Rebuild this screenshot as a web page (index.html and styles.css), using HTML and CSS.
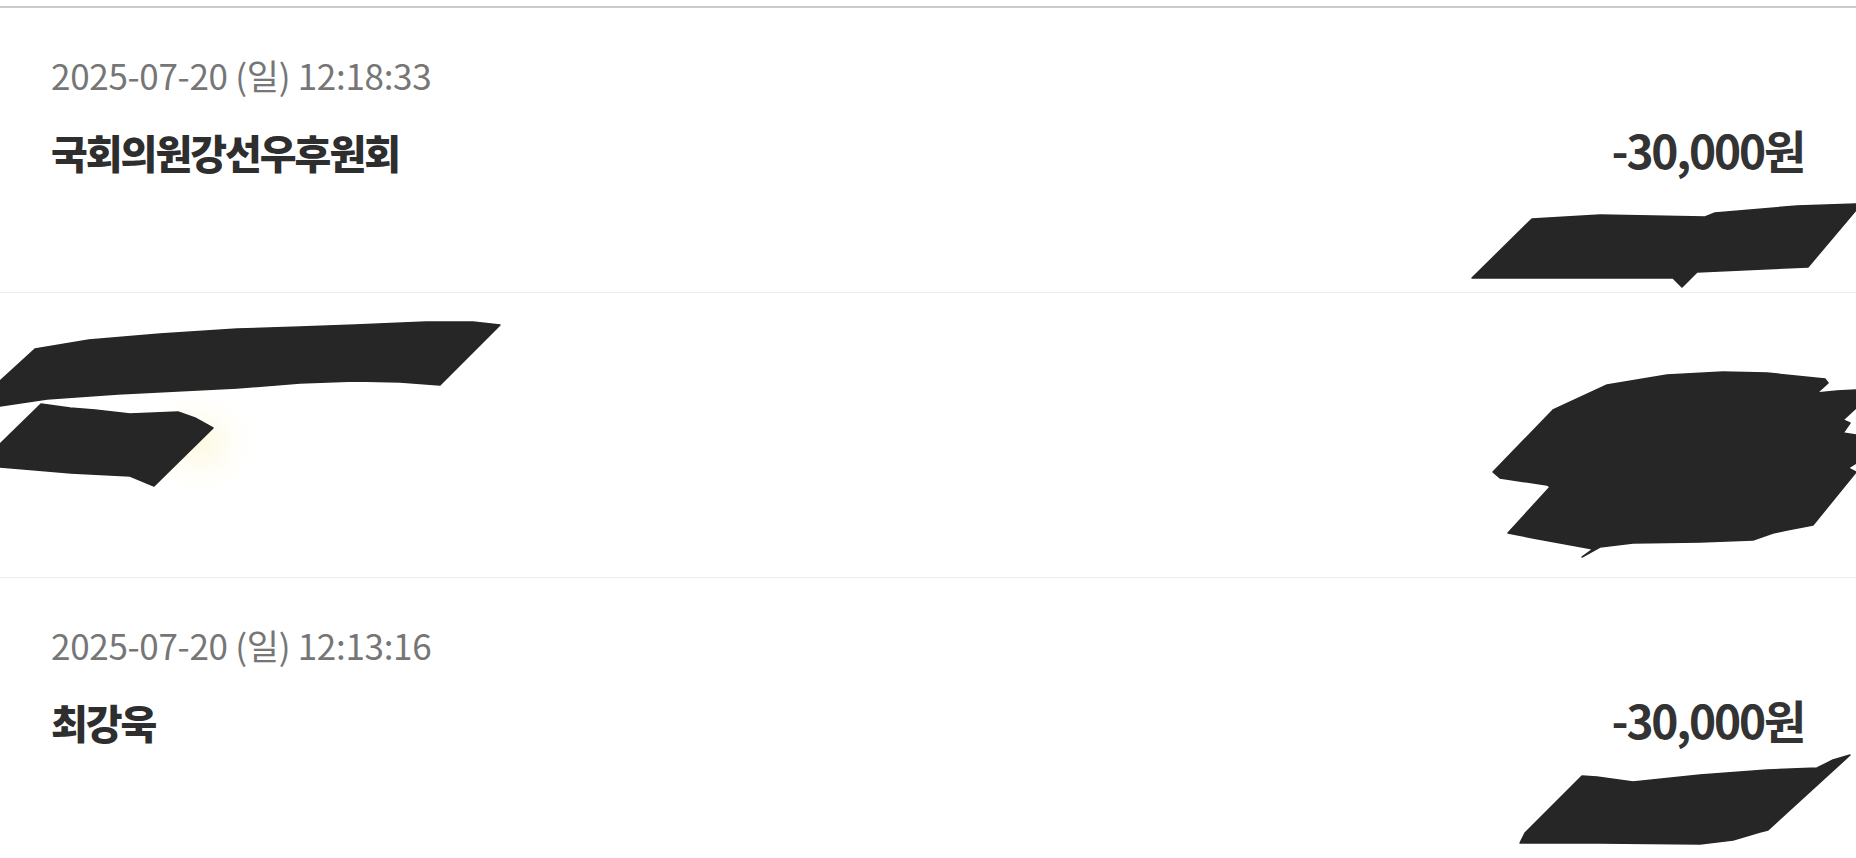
FILE: index.html
```html
<!DOCTYPE html>
<html>

<head>
  <meta charset="utf-8">
  <title>거래내역</title>
  <meta name="viewport" content="width=device-width,user-scalable=no">
  <link rel="stylesheet" href="styles.css">
</head>

<body>
  <div class="m-history">
    <ul class="list">
      <li class="item">
        <p class="date">2025-07-20 (일) 12:18:33</p>
        <div class="row">
          <span class="name">국회의원강선우후원회</span>
          <span class="amount">-30,000원</span>
        </div>
        <!-- 가림 표시 -->
        <svg class="mark" viewBox="0 0 1856 284" preserveAspectRatio="none">
          <polygon points="1472,270 1532,211 1600,207 1705,209 1715,205 1797,198 1856,196 1856,202 1808,259 1697,264 1682,279 1673,270" />
        </svg>
      </li>
      <li class="item">
        <svg class="mark" viewBox="0 0 1856 284" preserveAspectRatio="none">
          <defs>
            <radialGradient id="glow">
              <stop offset="0" stop-color="#fcf6d4" stop-opacity=".7" />
              <stop offset="1" stop-color="#fffdf0" stop-opacity="0" />
            </radialGradient>
          </defs>
          <ellipse class="glow" cx="200" cy="150" rx="60" ry="55" fill="url(#glow)" />
          <polygon points="0,88 35,56 89,47 160,41 237,36 300,34 355,32 426,29 473,29 500,32 440,92 400,89 355,88 300,90 237,95 118,101 47,106 0,113" />
          <polygon points="0,151 41,111 70,115 95,117 130,121 178,119 195,125 213,135 154,193 130,183 71,180 24,176 0,174" />
          <polygon points="1493,179 1553,117 1607,92 1667,82 1723,79 1767,80 1825,86 1828,90 1817,100 1837,98 1856,97 1856,115 1843,127 1850,130 1843,140 1856,142 1856,170 1848,175 1856,179 1813,232 1787,237 1773,240 1753,247 1700,249 1633,250 1600,254 1582,264 1593,256 1533,245 1508,240 1550,194 1547,192 1500,185" />
        </svg>
      </li>
      <li class="item">
        <p class="date">2025-07-20 (일) 12:13:16</p>
        <div class="row">
          <span class="name">최강욱</span>
          <span class="amount">-30,000원</span>
        </div>
        <svg class="mark" viewBox="0 0 1856 284" preserveAspectRatio="none">
          <polygon points="1520,265 1525,255 1582,198 1597,199 1633,204 1700,197 1767,192 1817,190 1833,182 1850,177 1768,252 1760,254 1733,262 1700,266 1600,265 1550,265" />
        </svg>
      </li>
    </ul>
  </div>
</body>

</html>
```

FILE: styles.css
```css
* {
  margin: 0;
  padding: 0;
}

body {
  overflow: hidden;
  background: #fff;
  font-family: "Noto Sans CJK KR", "Noto Sans", sans-serif;
}

li {
  list-style: none;
}

.m-history {
  padding-top: 6px;
}

.m-history .list {
  border-top: 2px solid #cbcbcb;
}

.m-history .item {
  position: relative;
  height: 284px;
  padding: 0 52px 0 51px;
  border-bottom: 1px solid #ececec;
}

.m-history .date {
  padding-top: 45px;
  font-size: 35px;
  line-height: 44px;
  color: #767676;
  letter-spacing: -0.3px;
}

.m-history .row {
  display: flex;
  justify-content: space-between;
  align-items: baseline;
  margin-top: 28px;
  line-height: 48px;
}

.m-history .name {
  font-size: 40px;
  font-weight: 900;
  color: #2e2e2e;
  letter-spacing: -2px;
}

.m-history .amount {
  font-size: 46px;
  font-weight: 700;
  color: #333;
  letter-spacing: -2.2px;
}

.m-history .mark {
  position: absolute;
  left: 0;
  top: 0;
  width: 100%;
  height: 100%;
}

.m-history .mark polygon {
  fill: #262626;
  stroke: #262626;
  stroke-width: 1.5;
  stroke-linejoin: round;
}
```
